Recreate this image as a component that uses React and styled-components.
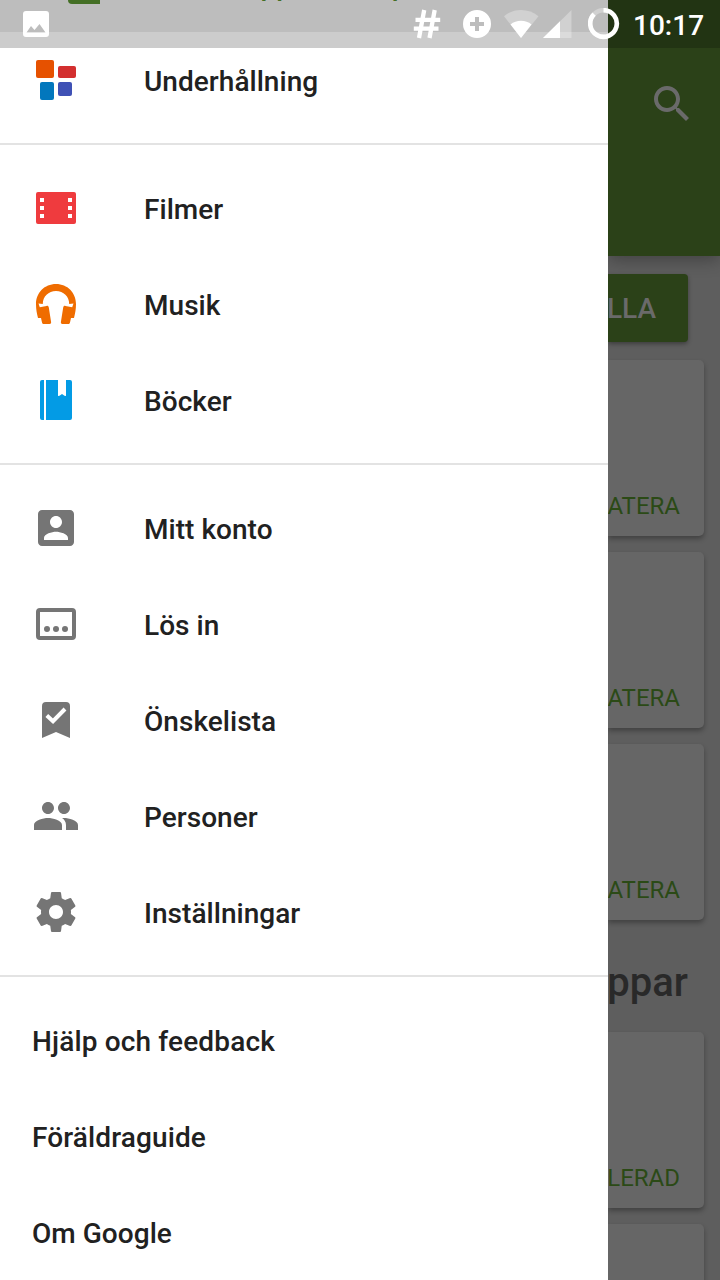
import React from "react";
import styled, { createGlobalStyle } from "styled-components";

const GlobalStyle = createGlobalStyle`
  * { box-sizing: border-box; }
  body { margin: 0; background: #5e5e5e; font-family: Roboto, "Noto Sans", sans-serif; }
`;

const Screen = styled.div`
  position: relative;
  display: flex;
  width: 720px;
  height: 1280px;
  overflow: hidden;
`;

/* Status bar */
const StatusBar = styled.header`
  position: absolute;
  top: 0;
  left: 0;
  z-index: 3;
  display: flex;
  align-items: center;
  width: 720px;
  height: 48px;
  padding: 0 0 0 23px;
  background: rgba(0, 0, 0, 0.2);
  color: #fff;
`;

const StatusIcon = styled.svg`
  display: block;
  flex: none;
  margin-left: ${(p) => p.$gap || "0"};
`;

const Clock = styled.time`
  margin-left: 13px;
  font-size: 28px;
  font-weight: 500;
  line-height: 48px;
  padding-top: 3px;
`;

/* Drawer */
const Drawer = styled.nav`
  position: relative;
  z-index: 2;
  flex: none;
  display: flex;
  flex-direction: column;
  justify-content: flex-end;
  width: 608px;
  height: 1280px;
  background: #fff;
`;

const Section = styled.div`
  & + & {
    margin-top: 15px;
    padding-top: 15px;
    border-top: 2px solid #e3e3e3;
  }
`;

const Row = styled.div`
  display: flex;
  align-items: center;
  height: 96px;
  padding-left: 32px;
  font-size: 28px;
  font-weight: 500;
  color: #212121;
`;

const SelectedRow = styled(Row)`
  padding-left: 64px;
  background: #ededed;
  color: #558b2f;
`;

const RowIcon = styled.svg`
  flex: none;
  display: block;
  width: 48px;
  height: 48px;
  margin-right: 64px;
  fill: ${(p) => p.$color || "#757575"};
`;

const Label = styled.span`
  padding-top: 4px;
  line-height: 34px;
  letter-spacing: ${(p) => p.$tracking || "0.04px"};
  white-space: nowrap;
`;

/* Dimmed page behind the drawer */
const Page = styled.main`
  flex: none;
  width: 112px;
  height: 1280px;
  overflow: hidden;
  background: #5e5e5e;
`;

const AppBar = styled.div`
  display: flex;
  justify-content: flex-end;
  height: 256px;
  padding: 80px 24px 0 0;
  background: #2b4118;
  box-shadow: 0 4px 16px rgba(0, 0, 0, 0.3);
`;

const SearchIcon = styled.svg`
  width: 48px;
  height: 48px;
  fill: #6a6a6a;
`;

const UpdateAll = styled.div`
  width: 80px;
  height: 68px;
  margin: 18px 0;
  padding-right: 32px;
  border-radius: 0 4px 4px 0;
  background: #2b4118;
  box-shadow: 0 2px 4px rgba(0, 0, 0, 0.35);
  color: #6a6a6a;
  font-size: 28px;
  font-weight: 500;
  line-height: 69px;
  display: flex;
  justify-content: flex-end;
`;

const Card = styled.article`
  display: flex;
  align-items: flex-end;
  justify-content: flex-end;
  width: 96px;
  height: 176px;
  margin-bottom: 16px;
  padding: 0 24px 16px 0;
  border-radius: 0 5px 5px 0;
  background: #666;
  box-shadow: 0 3px 5px rgba(0, 0, 0, 0.3);
  color: #2b4a16;
  font-size: 24px;
  line-height: 28px;
`;

const Heading = styled.h2`
  display: flex;
  justify-content: flex-end;
  height: 96px;
  margin: 0;
  padding-right: 32px;
  color: #292929;
  font-size: 40px;
  font-weight: 500;
  line-height: 93px;
`;

const Item = ({ label, color, children }) => (
  <Row>
    <RowIcon viewBox="0 0 48 48" $color={color}>{children}</RowIcon>
    <Label>{label}</Label>
  </Row>
);

const Status = () => (
  <StatusBar>
    <StatusIcon width="26" height="26" viewBox="0 0 26 26">
      <path fill="#fff" fillRule="evenodd" d="M3 0h20a3 3 0 0 1 3 3v20a3 3 0 0 1-3 3H3a3 3 0 0 1-3-3V3a3 3 0 0 1 3-3zM3.500 21.500h19L16.500 13l-5 6-3.500-4z" />
    </StatusIcon>
    <StatusIcon width="28" height="30" viewBox="0 0 28 30" $gap="364px">
      <path d="M11.200 1L6 29M21.700 1L16.500 29M2.500 10.800h24.700M.8 19.700h24.700" stroke="#fff" strokeWidth="4.300" fill="none" />
    </StatusIcon>
    <StatusIcon width="28" height="28" viewBox="0 0 28 28" $gap="22px">
      <path fill="#fff" fillRule="evenodd" d="M14 0a14 14 0 1 1 0 28a14 14 0 0 1 0-28zM12 7v5H7v4h5v5h4v-5h5v-4h-5V7z" />
    </StatusIcon>
    <StatusIcon width="36" height="28" viewBox="0 0 36 28" $gap="13px">
      <path fill="#fff" fillOpacity=".3" d="M17 28L0 6.200C5 2 10.500 0 17 0s12.500 2 17.500 6.200z" />
      <path fill="#fff" d="M17 28L6.500 14.500C9.500 12 13 10.800 17 10.800s7.500 1.200 10.500 3.700z" />
    </StatusIcon>
    <StatusIcon width="29" height="28" viewBox="0 0 29 28" $gap="3px">
      <path fill="#fff" fillOpacity=".3" d="M0 28L28.500 0v28z" />
      <path fill="#fff" d="M0 28L17 11.300V28z" />
    </StatusIcon>
    <StatusIcon width="32" height="32" viewBox="0 0 32 32" $gap="16px">
      <circle cx="15.500" cy="15.500" r="13.300" fill="none" stroke="#fff" strokeOpacity=".3" strokeWidth="4.600" />
      <path d="M15.500 2.200A13.300 13.300 0 1 1 6.100 6.100" fill="none" stroke="#fff" strokeWidth="4.600" />
    </StatusIcon>
    <Clock>10:17</Clock>
  </StatusBar>
);

export default function App() {
  return (
    <>
      <GlobalStyle />
      <Screen>
        <Status />
        <Drawer>
          <Section>
            <SelectedRow>
              <RowIcon viewBox="0 0 48 48" $color="#558b2f">
                <path d="M4 4h32v40H8a4 4 0 0 1-4-4z" />
              </RowIcon>
              <Label>Mina appar och spel</Label>
            </SelectedRow>
            <Item label="Underhållning">
              <rect x="4" y="4" width="18" height="18" rx="2" fill="#e65100" />
              <rect x="26" y="10" width="18" height="12" rx="2" fill="#d32f2f" />
              <rect x="8" y="26" width="14" height="18" rx="2" fill="#0277bd" />
              <rect x="26" y="26" width="14" height="14" rx="2" fill="#3f51b5" />
            </Item>
          </Section>
          <Section>
            <Item label="Filmer" color="#ef3b3e">
              <path fillRule="evenodd" d="M6 8h36a2 2 0 0 1 2 2v28a2 2 0 0 1-2 2H6a2 2 0 0 1-2-2V10a2 2 0 0 1 2-2zM8 14v4h4v-4zm0 8v4h4v-4zm0 8v4h4v-4zM36 14v4h4v-4zm0 8v4h4v-4zm0 8v4h4v-4z" />
            </Item>
            <Item label="Musik" color="#ef6c00">
              <path d="M24 4C12.500 4 4 12.800 4 24c0 5 .8 9.500 2 14h3l1 4.500c.3 1 .9 1.500 2 1.500h5.500c1.200 0 1.800-.8 1.600-2L16.800 27.500c-.2-1.300-1-1.800-2.200-1.600L7.800 27.200L6.500 23.500l4.300.5C10.800 16.500 16.500 11 24 11s13.200 5.500 13.200 13l4.300-.5l-1.300 3.700l-6.800-1.300c-1.200-.2-2 .3-2.200 1.600L28.900 42c-.2 1.200.4 2 1.600 2H36c1.100 0 1.700-.5 2-1.500l1-4.500h3c1.200-4.500 2-9 2-14C44 12.800 35.500 4 24 4z" />
            </Item>
            <Item label="Böcker" color="#039be5">
              <path d="M10 4h2v40h-2a2 2 0 0 1-2-2V6a2 2 0 0 1 2-2zM14 4h12v16l1.500-.300 2.500-1.700 2.500 1.700 1.500.300V4h4a2 2 0 0 1 2 2v36a2 2 0 0 1-2 2H14z" />
            </Item>
          </Section>
          <Section>
            <Item label="Mitt konto">
              <path d="M6 10v28c0 2.210 1.770 4 4 4h28c2.210 0 4-1.790 4-4V10c0-2.210-1.790-4-4-4H10c-2.230 0-4 1.790-4 4zm24 8c0 3.310-2.690 6-6 6s-6-2.690-6-6 2.690-6 6-6 6 2.690 6 6zM12 34c0-4 8-6.200 12-6.200S36 30 36 34v2H12v-2z" />
            </Item>
            <Item label="Lös in">
              <path fillRule="evenodd" d="M8 8h32a4 4 0 0 1 4 4v24a4 4 0 0 1-4 4H8a4 4 0 0 1-4-4V12a4 4 0 0 1 4-4zm0 4v24h32V12z" />
              <circle cx="15" cy="29" r="3" />
              <circle cx="24" cy="29" r="3" />
              <circle cx="33" cy="29" r="3" />
            </Item>
            <Item label="Önskelista">
              <path d="M14 6h20a4 4 0 0 1 4 4v32l-14-6-14 6V10a4 4 0 0 1 4-4z" />
              <path d="M14.800 19.500l6.200 5.700L33 13" fill="none" stroke="#fff" strokeWidth="4" />
            </Item>
            <Item label="Personer">
              <path d="M32 22c3.310 0 5.980-2.690 5.980-6s-2.670-6-5.980-6c-3.310 0-6 2.690-6 6s2.690 6 6 6zm-16 0c3.310 0 5.980-2.690 5.980-6s-2.670-6-5.980-6c-3.310 0-6 2.690-6 6s2.690 6 6 6zm0 4c-4.670 0-14 2.340-14 7v5h28v-5c0-4.660-9.330-7-14-7zm16 0c-.58 0-1.230.040-1.930.110C32.390 27.780 34 30.030 34 33v5h12v-5c0-4.660-9.330-7-14-7z" />
            </Item>
            <Item label="Inställningar">
              <path d="M38.860 25.950c.080-.64.140-1.290.14-1.950s-.060-1.310-.14-1.950l4.230-3.310c.38-.3.490-.84.240-1.280l-4-6.930c-.25-.43-.77-.61-1.220-.43l-4.980 2.010c-1.030-.79-2.160-1.460-3.380-1.970L29 4.840c-.090-.47-.5-.84-1-.84h-8c-.5 0-.91.370-.99.840l-.75 5.300c-1.220.51-2.350 1.170-3.380 1.970L9.900 10.100c-.45-.17-.97 0-1.220.43l-4 6.930c-.25.430-.14.970.24 1.280l4.220 3.310C9.060 22.690 9 23.340 9 24s.060 1.310.14 1.950l-4.220 3.310c-.38.3-.49.840-.24 1.280l4 6.930c.25.430.77.610 1.220.43l4.980-2.010c1.030.79 2.160 1.460 3.380 1.970l.75 5.300c.080.470.490.840.99.840h8c.5 0 .91-.37.990-.84l.75-5.300c1.220-.51 2.350-1.170 3.380-1.970l4.980 2.010c.45.170.97 0 1.220-.43l4-6.930c.25-.43.140-.97-.24-1.280l-4.220-3.310zM24 31c-3.870 0-7-3.130-7-7s3.130-7 7-7 7 3.130 7 7-3.130 7-7 7z" />
            </Item>
          </Section>
          <Section>
            <Row><Label $tracking="0.15px">Hjälp och feedback</Label></Row>
            <Row><Label $tracking="0.13px">Föräldraguide</Label></Row>
            <Row><Label>Om Google</Label></Row>
          </Section>
        </Drawer>
        <Page>
          <AppBar>
            <SearchIcon viewBox="0 0 48 48">
              <path d="M31 28h-1.590l-.55-.55C30.820 25.180 32 22.230 32 19c0-7.180-5.820-13-13-13S6 11.820 6 19s5.820 13 13 13c3.230 0 6.180-1.180 8.450-3.130l.55.550V31l10 9.980L40.980 38 31 28zm-12 0c-4.970 0-9-4.030-9-9s4.030-9 9-9 9 4.030 9 9-4.030 9-9 9z" />
            </SearchIcon>
          </AppBar>
          <UpdateAll>LLA</UpdateAll>
          <Card>ATERA</Card>
          <Card>ATERA</Card>
          <Card>ATERA</Card>
          <Heading>ppar</Heading>
          <Card>LERAD</Card>
          <Card />
        </Page>
      </Screen>
    </>
  );
}
